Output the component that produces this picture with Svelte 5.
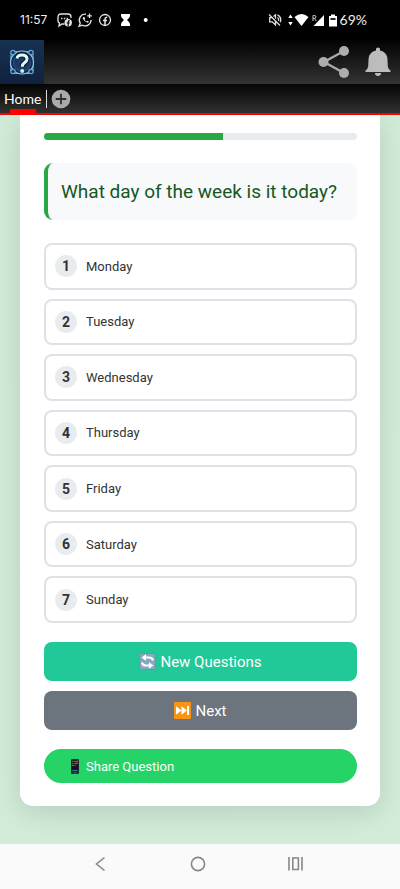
<script>
  const days = ['Monday', 'Tuesday', 'Wednesday', 'Thursday', 'Friday', 'Saturday', 'Sunday'];
  const progress = 57.3;
</script>

<div class="screen">
  <div class="status">
    <span class="clock">11:57</span>
    <svg class="notes" width="94" height="16" viewBox="0 0 94 16" fill="none" stroke="#e4e4e4" stroke-width="1.3" aria-hidden="true">
      <path d="M7.500 12H5l-3 2 .6-3Q1 10.500 1 9V5q0-3 3-3h7q3 0 3 3v1" />
      <path d="M4 6.500h1.400m1.400 0h1.400m1.400 0H11" stroke-width="1.500" />
      <circle cx="11.200" cy="10.800" r="3.700" fill="#e4e4e4" stroke="none" />
      <path d="M11.200 14.500V9.800q0-1.200 1.500-1.200M9.700 11h3" stroke="#000" stroke-width="1.100" />
      <path d="M29 2.200a5.900 5.900 0 0 0-5.800 9L22 14.200l3.300-1A5.900 5.900 0 0 0 34 8" />
      <path d="M26 5.300q-.8 1.200 1 3.300t4 2.200l1-1-1.700-1.100-1 .7q-1.400-.7-1.800-1.900l.7-.8-.8-1.800z" fill="#e4e4e4" stroke="none" />
      <path d="M32.500 1.500v4.600M30.200 3.800h4.600" />
      <circle cx="48" cy="8" r="5.500" />
      <path d="M48 13.500V7.200q0-2 2.300-1.900M46 8.600h4" stroke-width="1.500" />
      <path d="M64 2h9v2q0 1.500-3 4 3 2.500 3 4v2h-9v-2q0-1.500 3-4-3-2.500-3-4z" fill="#fff" stroke="none" />
      <circle cx="88.700" cy="8" r="2" fill="#fff" stroke="none" />
    </svg>
    <svg class="signals" width="70" height="16" viewBox="0 0 70 16" aria-hidden="true">
      <g fill="none" stroke="#ddd" stroke-width="1.300">
        <path d="M5 5.600H1.700v4.300h2.500L7.500 13V9M5.500 4.500l2-1.700v4M1 2.500l11 11M9.500 5.500q1.800 1.300 1 3.500M9.500 2.800q4.500 2.200 2.800 7.500" />
      </g>
      <path fill="#fff" d="m22.500 2.500 2.200 3.500h-4.400zm0 11L20.300 10h4.400zM26.500 5q7-6 14 0l-7 9zM56 3v11H45.500zM61 4h2V2.500h4V4h2v10.500h-8z" />
      <path d="M62.500 6h5v2h-5z" fill="#222" />
      <path d="M45 9V3.500h1.500q1.500 0 1.500 1.400t-1.500 1.400H45m1.500 0L48.200 9" fill="none" stroke="#ddd" stroke-width=".9" />
    </svg>
    <span class="battery">69%</span>
  </div>

  <header>
    <a class="logo" href="#home" aria-label="Quiz home">
      <svg width="44" height="44" viewBox="0 0 44 44" aria-hidden="true">
        <defs>
          <linearGradient id="navy" x2="0" y2="1"><stop stop-color="#183253" /><stop offset="1" stop-color="#10213d" /></linearGradient>
        </defs>
        <path fill="url(#navy)" d="M0 0h44v44H0z" />
        <g fill="#152c50" stroke="#67a9d6" stroke-width="1.200">
          <path d="M14 11.500h16l3 3v16l-3 3H14l-3-3v-16z" />
          <circle cx="22" cy="22.500" r="11.500" stroke="#8acbed" />
          <circle cx="13" cy="12.500" r="2.200" /><circle cx="31" cy="12.500" r="2.200" />
          <circle cx="13" cy="31.500" r="2.200" /><circle cx="31" cy="31.500" r="2.200" />
          <circle cx="22" cy="22.500" r="8.500" stroke="#284d7b" fill="#1b3963" />
        </g>
        <path d="M17 18.500q.4-3.500 5-3.500 5 0 5 4 0 2-2.500 3.700-2.300 1.500-2.300 4" fill="none" stroke="#0b1830" stroke-width="5" />
        <path d="M17 18.500q.4-3.500 5-3.500 5 0 5 4 0 2-2.500 3.700-2.300 1.500-2.300 4" fill="none" stroke="#e0fbf5" stroke-width="3" />
        <circle cx="22.200" cy="31" r="2" fill="#b7f4ee" />
      </svg>
    </a>
    <div class="tools">
      <button aria-label="Share">
        <svg width="32" height="34" viewBox="0 0 32 34" aria-hidden="true">
          <path d="M26 6 6 17l20 11" fill="none" stroke="#a9a9a9" stroke-width="2.400" />
          <g fill="#adadad"><circle cx="26" cy="6" r="5" /><circle cx="5.500" cy="17" r="5" /><circle cx="26" cy="28" r="5" /></g>
        </svg>
      </button>
      <button aria-label="Notifications">
        <svg width="26" height="30" viewBox="0 0 26 30" aria-hidden="true">
          <path fill="#bcbcbc" d="M11 3.500V2q0-1.500 2-1.500T15 2v1.500q7 1.500 7.500 8.500l.3 7.500q.2 2 2.700 4V25H.5v-1.500q2.500-2 2.700-4l.3-7.500Q4 5 11 3.500zM10 26h6q0 3-3 3t-3-3z" />
        </svg>
      </button>
    </div>
  </header>

  <nav class="tabs">
    <a class="tab" href="#home" aria-current="page">Home</a>
    <button class="add" aria-label="Add tab">
      <svg width="20" height="20" viewBox="0 0 20 20" aria-hidden="true"><circle cx="10" cy="10" r="9.300" fill="#aaa" /><path d="M10 4.700v10.600M4.700 10h10.600" stroke="#303030" stroke-width="1.800" /></svg>
    </button>
  </nav>

  <main>
    <section class="card">
      <div class="progress" role="progressbar" aria-label="Quiz progress" aria-valuenow={progress} aria-valuemin="0" aria-valuemax="100">
        <div class="fill" style="width: {progress}%"></div>
      </div>
      <h1>What day of the week is it today?</h1>
      <div class="options">
        {#each days as day, i}
          <button class="option"><span class="number">{i + 1}</span><span>{day}</span></button>
        {/each}
      </div>
      <div class="actions">
        <button class="action new">
          <svg width="17" height="17" viewBox="0 0 17 17" aria-hidden="true">
            <rect x=".5" y=".5" width="16" height="16" rx="1" fill="#87a9bf" stroke="#6c93ad" />
            <path d="M14 7.500Q13.500 4.500 10 4.500H6.500M3 9.500q.5 3 4 3h3.500" fill="none" stroke="#fff" stroke-width="2.200" />
            <path d="M7 1.300v6.400L2.500 4.500zM10 9.300v6.400l4.500-3.200z" fill="#fff" />
          </svg>
          New Questions
        </button>
        <button class="action next">
          <svg width="17" height="17" viewBox="0 0 17 17" aria-hidden="true">
            <rect width="17" height="17" rx="1" fill="#fb9412" />
            <path d="M2 4.200 7.500 8.500 2 12.800zM7.500 4.200 13 8.500l-5.500 4.300zM13 4h2v9h-2z" fill="#fff" />
          </svg>
          Next
        </button>
      </div>
      <button class="share">
        <svg width="10" height="15" viewBox="0 0 10 15" aria-hidden="true">
          <rect x="1" width="8" height="15" rx="1" fill="#283238" />
          <path fill="#10151a" d="M1.700 1.200h6.600v11.500H1.700z" />
          <path d="M2.300 2.300h1.200m1 0h1.200" stroke="#e65247" stroke-width="1.200" /><path d="M6.500 2.300h1.300M2.300 6.300h1.200" stroke="#f28b2c" stroke-width="1.200" />
          <path d="M2.300 4.300h1.200m1 2h1.200" stroke="#278fce" stroke-width="1.200" /><path d="M4.500 4.300h3.300" stroke="#dc5645" stroke-width="1.200" />
          <path d="M2.300 11.600h5.400" stroke="#298fbd" /><path d="M4 13.800h2" stroke="#718087" stroke-width=".7" />
        </svg>
        Share Question
      </button>
    </section>
  </main>

  <footer>
    <button aria-label="Back"><svg width="16" height="16" viewBox="0 0 16 16" aria-hidden="true"><path d="M12.500 1.500 4.500 8l8 6.500" /></svg></button>
    <button aria-label="Home screen"><svg width="16" height="16" viewBox="0 0 16 16" aria-hidden="true"><circle cx="8" cy="8" r="6.600" /></svg></button>
    <button aria-label="Recent apps"><svg width="16" height="16" viewBox="0 0 16 16" aria-hidden="true"><path d="M1 1v13.500M14 1v13.500M4.800 2h5.600v11.500H4.800z" /></svg></button>
  </footer>
</div>

<style>
  :global(body) { margin: 0; }
  * { box-sizing: border-box; }
  button { border: 0; padding: 0; background: none; font: inherit; color: inherit; cursor: pointer; }
  svg { display: block; flex: none; }
  a { color: inherit; text-decoration: none; }
  .screen { display: flex; flex-direction: column; min-height: 100vh; font-family: Roboto, sans-serif; color: #333; }
  .status { display: flex; align-items: center; height: 40px; padding: 0 33px 0 20px; background: #000; color: #eee; font: 14px/16px Lato, sans-serif; }
  .clock { width: 37px; font-family: Inter, sans-serif; font-size: 12px; }
  .signals { margin-left: auto; }
  .battery { margin-left: 2px; }
  header { display: flex; justify-content: space-between; height: 44px; background: linear-gradient(#020202, #333); }
  .tools { display: flex; align-items: center; gap: 15px; padding-right: 9px; }
  .tabs { display: flex; align-items: center; height: 31px; padding-left: 4px; background: linear-gradient(#050505, #303030); border-bottom: 2px solid #f00; color: #fff; }
  .tab { position: relative; padding-right: 5px; border-right: 1px solid #ddd; font: 14px/18px Lato, sans-serif; }
  .tab::after { content: ""; position: absolute; left: 6px; right: 10px; bottom: -7px; height: 6px; background: #f00; }
  .add { margin-left: 4px; }
  main { flex: 1; padding: 0 20px 38px; background: linear-gradient(135deg, #d0ebd7, #d2ecd9); overflow: hidden; }
  .card { padding: 18px 23px 23px 24px; border-radius: 0 0 13px 13px; background: #fff; box-shadow: 0 7px 28px rgb(0 0 0 / 12%); }
  .progress { height: 7px; border-radius: 4px; background: #e9ecef; overflow: hidden; }
  .fill { height: 100%; background: #28a745; }
  h1 { margin: 23px 0; padding: 16px 0 16px 13px; border-left: 4px solid #28a745; border-radius: 9px; background: #f8f9fa; color: #155724; font-size: 19px; font-weight: 400; line-height: 25px; }
  .options { display: grid; grid-auto-rows: 1fr; gap: 9px; min-height: 380px; }
  .option { display: flex; align-items: center; gap: 9px; padding: 0 9px; border: 2px solid #dee2e6; border-radius: 8px; background: #fff; font-size: 13px; text-align: left; }
  .number { display: grid; place-items: center; width: 22px; height: 22px; border-radius: 50%; background: #e9ecef; font-size: 14px; font-weight: 700; }
  .actions { display: grid; gap: 10px; margin: 19px 0; }
  .action { display: flex; justify-content: center; align-items: center; gap: 4px; height: 39px; border-radius: 8px; color: #fff; font-size: 15px; }
  .new { background: #20c997; }
  .next { background: #6c757d; }
  .share { display: flex; align-items: center; gap: 6px; width: 100%; height: 34px; padding: 0 26px; border-radius: 17px; background: #25d366; color: #fff; font-size: 13px; }
  footer { display: flex; justify-content: center; align-items: flex-start; gap: 82px; height: 45px; padding: 12px 5px 0 0; background: #fafafa; }
  footer svg { fill: none; stroke: #888; stroke-width: 1.6; }
</style>
